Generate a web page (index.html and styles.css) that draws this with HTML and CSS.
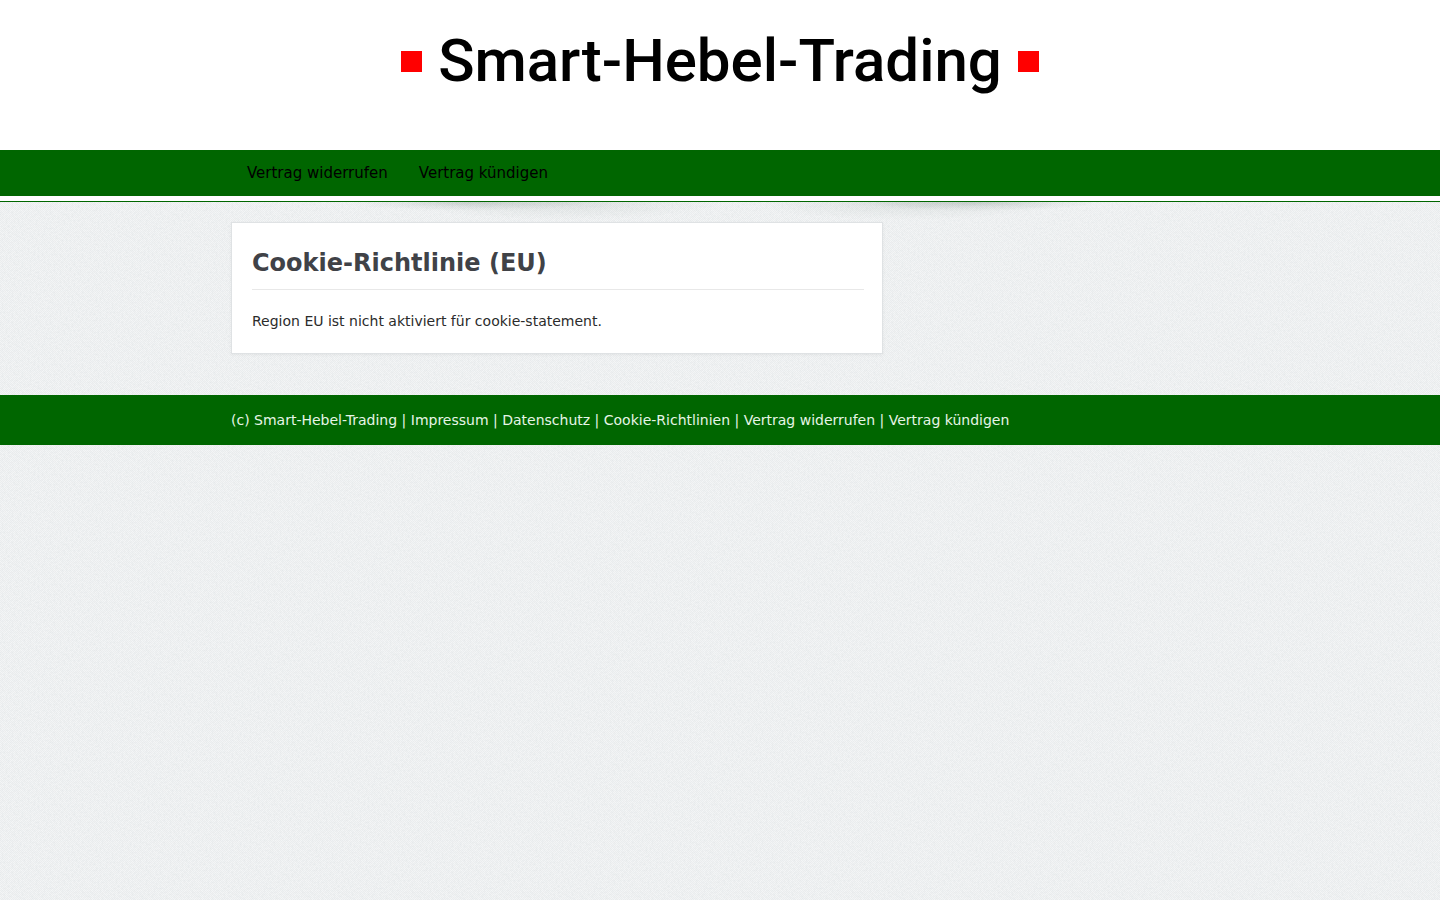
FILE: index.html
```html
<!DOCTYPE html>
<html lang="de">
<head>
<meta charset="utf-8">
<meta name="viewport" content="width=device-width, initial-scale=1">
<title>Cookie-Richtlinie (EU) - Smart-Hebel-Trading</title>
<link rel="stylesheet" href="styles.css">
</head>
<body>
<header class="site-header">
  <a class="logo" href="#"><span class="logo-square"></span><span class="logo-text">Smart-Hebel-Trading</span><span class="logo-square"></span></a>
</header>
<nav class="site-nav" aria-label="Hauptmenü">
  <ul class="wrap nav-list">
    <li><a href="#">Vertrag widerrufen</a></li>
    <li><a href="#">Vertrag kündigen</a></li>
  </ul>
</nav>
<div class="nav-edge"></div>
<svg class="nav-shadow" viewBox="0 0 1440 20" preserveAspectRatio="none" aria-hidden="true">
  <defs>
    <radialGradient id="shade" cx="0.5" cy="0" r="0.5" gradientTransform="scale(1 2)">
      <stop offset="0" stop-color="#425a4c" stop-opacity="0.2"/>
      <stop offset="0.5" stop-color="#425a4c" stop-opacity="0.08"/>
      <stop offset="1" stop-color="#425a4c" stop-opacity="0"/>
    </radialGradient>
  </defs>
  <rect x="350" y="0" width="240" height="9" fill="url(#shade)"/>
  <rect x="410" y="0" width="310" height="18" fill="url(#shade)" opacity="0.6"/>
  <rect x="860" y="0" width="240" height="9" fill="url(#shade)"/>
  <rect x="750" y="0" width="310" height="18" fill="url(#shade)" opacity="0.6"/>
</svg>
<main class="wrap content">
  <article class="card">
    <h1>Cookie-Richtlinie (EU)</h1>
    <p>Region EU ist nicht aktiviert für cookie-statement.</p>
  </article>
</main>
<footer class="site-footer">
  <div class="wrap">(c) Smart-Hebel-Trading | <a href="#">Impressum</a> | <a href="#">Datenschutz</a> | <a href="#">Cookie-Richtlinien</a> | <a href="#">Vertrag widerrufen</a> | <a href="#">Vertrag kündigen</a></div>
</footer>
</body>
</html>
```
FILE: styles.css
```css
* { box-sizing: border-box; }
body {
  margin: 0;
  font: 14px/22px "DejaVu Sans", sans-serif;
  color: #2b2b2b;
  background:
    url("data:image/svg+xml,%3Csvg xmlns='http://www.w3.org/2000/svg' width='110' height='110'%3E%3Cfilter id='n' x='0' y='0' width='100%25' height='100%25'%3E%3CfeTurbulence type='fractalNoise' baseFrequency='0.5' numOctaves='2' seed='4' stitchTiles='stitch'/%3E%3CfeColorMatrix values='0 0 0 0 0.55 0 0 0 0 0.6 0 0 0 0 0.62 0.4 0 0 0 -0.15'/%3E%3C/filter%3E%3Crect width='110' height='110' filter='url(%23n)'/%3E%3C/svg%3E"),
    repeating-conic-gradient(#f4f6f7 0 25%, #eceeef 0 50%) 0 0 / 2px 2px;
}
a { color: inherit; text-decoration: none; }
.wrap { width: 100%; max-width: 978px; margin: 0 auto; }
.site-header {
  display: flex;
  justify-content: center;
  height: 150px;
  padding-top: 20px;
  background: #fff;
}
.logo {
  display: flex;
  align-items: center;
  gap: 16px;
  height: 82px;
  color: #000;
}
.logo-text { font: 500 60px/80px Roboto, sans-serif; }
.logo-square { width: 21px; height: 21px; background: #f00; }
.site-nav { background: #060; }
.nav-list { display: flex; padding: 0 1px; list-style: none; }
.nav-list a {
  display: block;
  padding: 0 16px 0 15px;
  font-size: 15px;
  line-height: 46px;
  color: #000;
}
.nav-edge { height: 6px; background: #fff; border-bottom: 1px solid #060; }
.nav-shadow { display: block; width: 100%; height: 20px; }
.card {
  width: 100%;
  max-width: 652px;
  padding: 20px 18px 21px 20px;
  background: #fff;
  border: 1px solid #dfe2e4;
  box-shadow: 0 1px 3px rgba(0, 0, 0, 0.05);
}
.card h1 {
  margin: 0 0 20px;
  padding-bottom: 6px;
  border-bottom: 1px solid #e8e8e8;
  font-size: 24px;
  line-height: 40px;
  color: #404247;
}
.card p { margin: 0; }
.site-footer {
  margin-top: 41px;
  padding: 14px 0;
  background: #060;
  color: #e6f5e6;
}
```
